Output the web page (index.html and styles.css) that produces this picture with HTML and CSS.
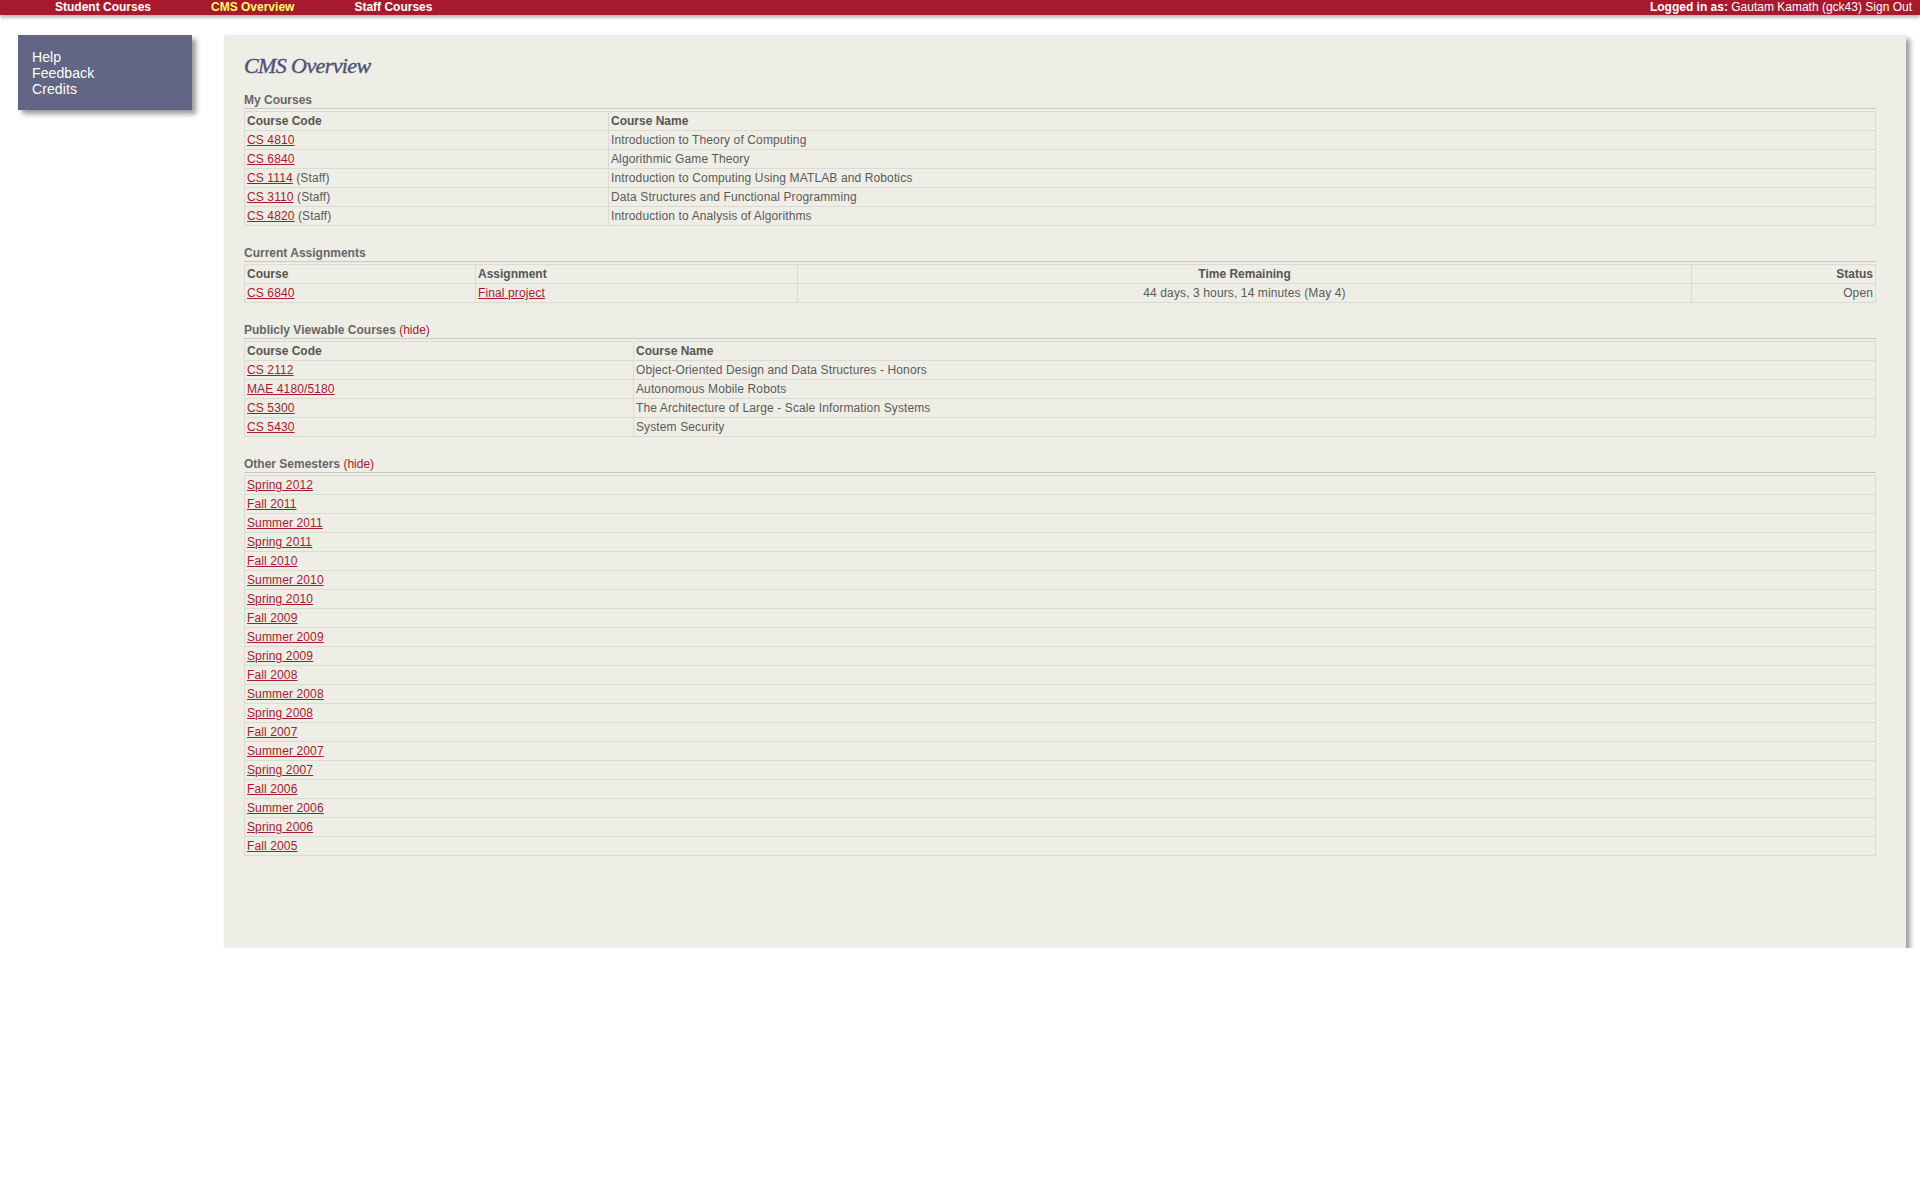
FILE: index.html
```html
<!DOCTYPE html>
<html>
<head>
<meta charset="utf-8">
<title>CMS Overview</title>
<link rel="stylesheet" href="styles.css">
</head>
<body>
<div class="topbar">
  <nav class="topnav">
    <a class="navlink" href="#">Student Courses</a>
    <a class="navlink active" href="#">CMS Overview</a>
    <a class="navlink" href="#">Staff Courses</a>
  </nav>
  <div class="userinfo"><b>Logged in as:</b> Gautam Kamath (gck43) Sign Out</div>
</div>
<div class="layout">
  <aside class="sidebar">
    <a href="#">Help</a>
    <a href="#">Feedback</a>
    <a href="#">Credits</a>
  </aside>
  <main class="main">
    <h1 class="title">CMS Overview</h1>

    <section class="section">
      <div class="sechead">My Courses</div>
      <table class="grid">
        <tr><th class="c-my1">Course Code</th><th>Course Name</th></tr>
        <tr><td><a href="#">CS 4810</a></td><td>Introduction to Theory of Computing</td></tr>
        <tr><td><a href="#">CS 6840</a></td><td>Algorithmic Game Theory</td></tr>
        <tr><td><a href="#">CS 1114</a> (Staff)</td><td>Introduction to Computing Using MATLAB and Robotics</td></tr>
        <tr><td><a href="#">CS 3110</a> (Staff)</td><td>Data Structures and Functional Programming</td></tr>
        <tr><td><a href="#">CS 4820</a> (Staff)</td><td>Introduction to Analysis of Algorithms</td></tr>
      </table>
    </section>

    <section class="section">
      <div class="sechead">Current Assignments</div>
      <table class="grid">
        <tr><th class="c-a1">Course</th><th class="c-a2">Assignment</th><th class="c-a3 center">Time Remaining</th><th class="right">Status</th></tr>
        <tr><td><a href="#">CS 6840</a></td><td><a href="#">Final project</a></td><td class="center">44 days, 3 hours, 14 minutes (May 4)</td><td class="right">Open</td></tr>
      </table>
    </section>

    <section class="section">
      <div class="sechead">Publicly Viewable Courses <a class="hide" href="#">(hide)</a></div>
      <table class="grid">
        <tr><th class="c-p1">Course Code</th><th>Course Name</th></tr>
        <tr><td><a href="#">CS 2112</a></td><td>Object-Oriented Design and Data Structures - Honors</td></tr>
        <tr><td><a href="#">MAE 4180/5180</a></td><td>Autonomous Mobile Robots</td></tr>
        <tr><td><a href="#">CS 5300</a></td><td>The Architecture of Large - Scale Information Systems</td></tr>
        <tr><td><a href="#">CS 5430</a></td><td>System Security</td></tr>
      </table>
    </section>

    <section class="section">
      <div class="sechead">Other Semesters <a class="hide" href="#">(hide)</a></div>
      <table class="grid">
        <tr><td><a href="#">Spring 2012</a></td></tr>
        <tr><td><a href="#">Fall 2011</a></td></tr>
        <tr><td><a href="#">Summer 2011</a></td></tr>
        <tr><td><a href="#">Spring 2011</a></td></tr>
        <tr><td><a href="#">Fall 2010</a></td></tr>
        <tr><td><a href="#">Summer 2010</a></td></tr>
        <tr><td><a href="#">Spring 2010</a></td></tr>
        <tr><td><a href="#">Fall 2009</a></td></tr>
        <tr><td><a href="#">Summer 2009</a></td></tr>
        <tr><td><a href="#">Spring 2009</a></td></tr>
        <tr><td><a href="#">Fall 2008</a></td></tr>
        <tr><td><a href="#">Summer 2008</a></td></tr>
        <tr><td><a href="#">Spring 2008</a></td></tr>
        <tr><td><a href="#">Fall 2007</a></td></tr>
        <tr><td><a href="#">Summer 2007</a></td></tr>
        <tr><td><a href="#">Spring 2007</a></td></tr>
        <tr><td><a href="#">Fall 2006</a></td></tr>
        <tr><td><a href="#">Summer 2006</a></td></tr>
        <tr><td><a href="#">Spring 2006</a></td></tr>
        <tr><td><a href="#">Fall 2005</a></td></tr>
      </table>
    </section>
  </main>
</div>
</body>
</html>
```
FILE: styles.css
```css
html, body {
  margin: 0;
  padding: 0;
  background: #ffffff;
  font-family: "Liberation Sans", Arial, sans-serif;
}

.topbar {
  display: flex;
  align-items: center;
  height: 15px;
  background: #a8192e;
  box-shadow: 0 2px 4px rgba(0, 0, 0, 0.35);
  font-size: 12px;
  line-height: 15px;
  color: #ffffff;
}

.topnav {
  display: flex;
  gap: 60px;
  padding-left: 55px;
}

.navlink {
  color: #ffffff;
  font-weight: bold;
  text-decoration: none;
}

.navlink.active {
  color: #ffff66;
}

.userinfo {
  margin-left: auto;
  padding-right: 8px;
}

.layout {
  display: flex;
  align-items: flex-start;
  padding-top: 20px;
}

.sidebar {
  display: flex;
  flex-direction: column;
  margin-left: 18px;
  width: 160px;
  padding: 14px 0 13px 14px;
  background: #636584;
  box-shadow: 4px 4px 5px rgba(0, 0, 0, 0.4);
  font-size: 14px;
  line-height: 16px;
  letter-spacing: 0.1px;
}

.sidebar a {
  color: #ffffff;
  text-decoration: none;
}

.main {
  margin-left: 32px;
  width: 1642px;
  padding: 18px 20px 72px 20px;
  background: #efeee6;
  box-shadow: 4px 4px 5px rgba(0, 0, 0, 0.4);
}

.title {
  margin: 0 0 14px 0;
  font-family: "Liberation Serif", "Times New Roman", serif;
  font-style: italic;
  font-weight: normal;
  font-size: 22px;
  line-height: 26px;
  letter-spacing: -0.6px;
  color: #4e5176;
  -webkit-text-stroke: 0.4px #4e5176;
}

.section {
  margin-bottom: 20px;
  width: 1632px;
}

.sechead {
  font-size: 12px;
  line-height: 14px;
  font-weight: bold;
  color: #666666;
  padding-bottom: 1px;
  border-bottom: 1px solid #c8c8c0;
  margin-bottom: 2px;
}

.sechead .hide {
  color: #a8192e;
  font-weight: normal;
  text-decoration: none;
}

.grid {
  width: 100%;
  border-collapse: collapse;
  font-size: 12px;
  line-height: 14px;
  color: #5a5a5a;
  letter-spacing: 0.12px;
}

.grid th,
.grid td {
  border: 1px solid #dcdbd3;
  padding: 2px;
  text-align: left;
  vertical-align: middle;
  height: 14px;
}

.grid th {
  font-weight: bold;
  color: #555555;
  letter-spacing: 0;
}

.grid a {
  color: #a8192e;
  text-decoration: underline;
}

.grid .center { text-align: center; }
.grid .right { text-align: right; }

.c-my1 { width: 359px; }
.c-p1 { width: 384px; }
.c-a1 { width: 226px; }
.c-a2 { width: 317px; }
.c-a3 { width: 889px; }
```
